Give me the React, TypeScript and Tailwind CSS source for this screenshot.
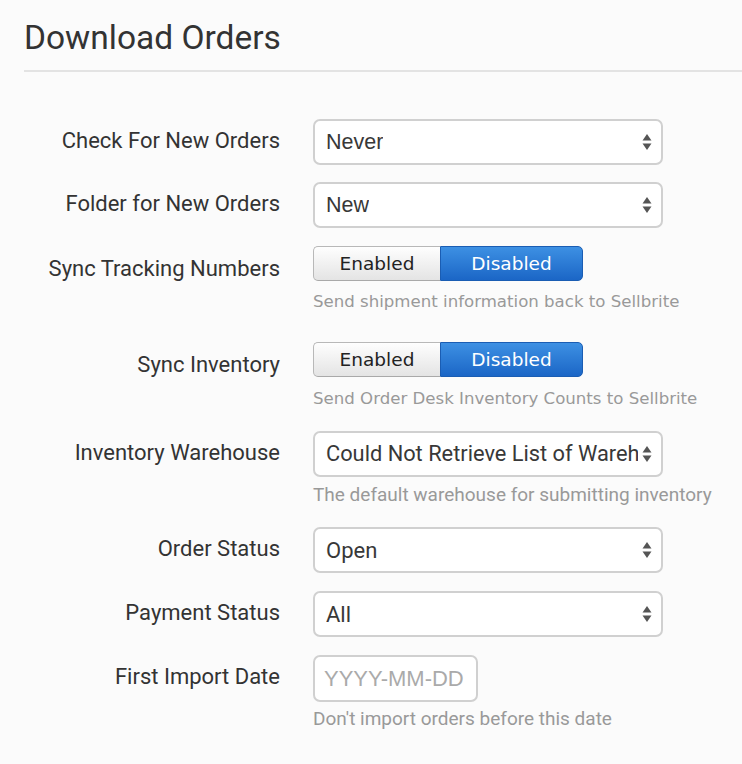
import React from 'react'

const labelBase =
  "w-[256px] shrink-0 text-right text-[22px] leading-[28px] text-[#333] font-['Roboto',sans-serif] whitespace-nowrap"

function Arrows() {
  return (
    <svg width="10" height="18" viewBox="0 0 10 18" className="shrink-0">
      <path d="M5 1 L9.5 7.5 H0.5 Z" fill="#555" />
      <path d="M5 17 L9.5 10.5 H0.5 Z" fill="#555" />
    </svg>
  )
}

function Select({ value, font }: { value: string; font?: string }) {
  return (
    <div className="w-[350px] h-[46px] flex items-center justify-between gap-[4px] rounded-[7px] border-2 border-[#d0d0d0] bg-white pl-[11px] pr-[9px]">
      <span
        className={
          'text-[#383838] whitespace-nowrap overflow-hidden ' +
          (font ?? "text-[22px] font-['Roboto',sans-serif]")
        }
      >
        {value}
      </span>
      <Arrows />
    </div>
  )
}

function Toggle() {
  return (
    <div className="flex h-[35px] font-['DejaVu_Sans',sans-serif] text-[18.5px]">
      <div className="w-[127px] flex items-center justify-center rounded-l-[5px] border border-r-0 border-[#b8b8b8] border-b-[#a9a9a9] bg-gradient-to-b from-[#fefefe] to-[#e4e4e4] text-[#222]">
        Enabled
      </div>
      <div className="w-[143px] flex items-center justify-center rounded-r-[5px] border border-[#1a5db3] bg-gradient-to-b from-[#3d90e3] to-[#1b66c6] text-white">
        Disabled
      </div>
    </div>
  )
}

function Help({ children, dejavu, className }: { children: React.ReactNode; dejavu?: boolean; className: string }) {
  return (
    <div
      className={
        'leading-[22px] text-[#999] whitespace-nowrap ' +
        (dejavu ? "font-['DejaVu_Sans',sans-serif] text-[16.6px] " : "font-['Roboto',sans-serif] text-[19px] ") +
        className
      }
    >
      {children}
    </div>
  )
}

export default function App() {
  return (
    <div className="w-[742px] h-[764px] bg-[#fbfbfb] pl-[24px] overflow-hidden">
      <div className="h-[72px] border-b-2 border-[#e3e3e3] flex items-start">
        <h1 className="pt-[18px] text-[33.5px] leading-[40px] text-[#333] font-['Roboto',sans-serif]">
          Download Orders
        </h1>
      </div>

      <div className="flex gap-[33px] mt-[47px]">
        <div className={labelBase + ' pt-[8px]'}>Check For New Orders</div>
        <Select value="Never" font="text-[21.5px] font-['Liberation_Sans',sans-serif]" />
      </div>

      <div className="flex gap-[33px] mt-[17px]">
        <div className={labelBase + ' pt-[8px]'}>Folder for New Orders</div>
        <Select value="New" font="text-[21.5px] font-['Liberation_Sans',sans-serif]" />
      </div>

      <div className="flex gap-[33px] mt-[18px]">
        <div className={labelBase + ' pt-[9px]'}>Sync Tracking Numbers</div>
        <div>
          <Toggle />
          <Help dejavu className="mt-[10px]">Send shipment information back to Sellbrite</Help>
        </div>
      </div>

      <div className="flex gap-[33px] mt-[29px]">
        <div className={labelBase + ' pt-[9px]'}>Sync Inventory</div>
        <div>
          <Toggle />
          <Help dejavu className="mt-[11px]">Send Order Desk Inventory Counts to Sellbrite</Help>
        </div>
      </div>

      <div className="flex gap-[33px] mt-[21px]">
        <div className={labelBase + ' pt-[8px]'}>Inventory Warehouse</div>
        <div>
          <Select value="Could Not Retrieve List of Warehouses" font="text-[21.8px] font-['Roboto',sans-serif]" />
          <Help className="mt-[7px]">The default warehouse for submitting inventory</Help>
        </div>
      </div>

      <div className="flex gap-[33px] mt-[21px]">
        <div className={labelBase + ' pt-[8px]'}>Order Status</div>
        <Select value="Open" />
      </div>

      <div className="flex gap-[33px] mt-[18px]">
        <div className={labelBase + ' pt-[8px]'}>Payment Status</div>
        <Select value="All" />
      </div>

      <div className="flex gap-[33px] mt-[18px]">
        <div className={labelBase + ' pt-[8px]'}>First Import Date</div>
        <div>
          <div className="w-[165px] h-[47px] flex items-center rounded-[7px] border-2 border-[#d0d0d0] bg-white pl-[9px] text-[22px] text-[#aaa] font-['Liberation_Sans',sans-serif]">
            YYYY-MM-DD
          </div>
          <Help className="mt-[6px]">Don't import orders before this date</Help>
        </div>
      </div>
    </div>
  )
}
